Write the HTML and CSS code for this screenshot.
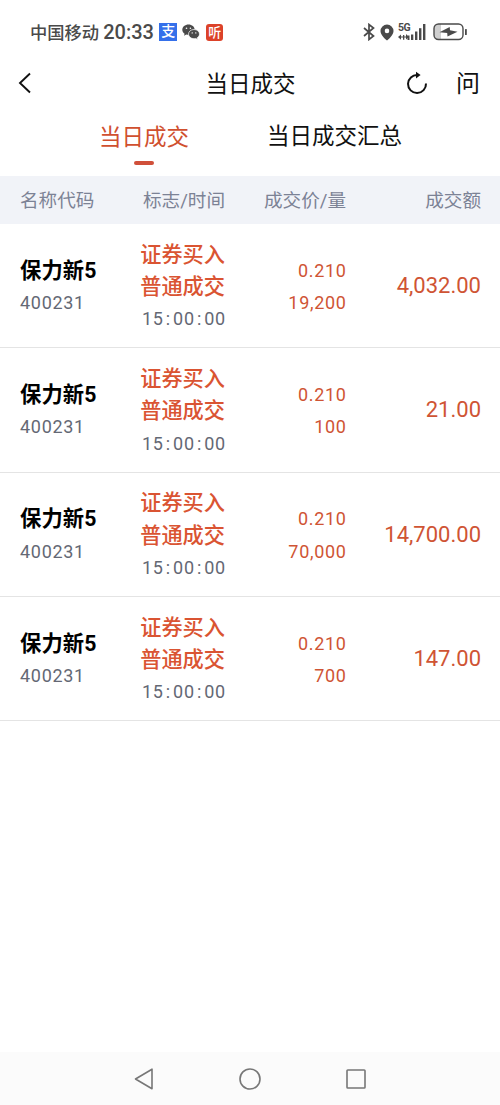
FILE: index.html
```html
<!DOCTYPE html>
<html lang="zh-CN">
<head>
    <meta charset="UTF-8">
    <meta name="viewport" content="width=device-width, initial-scale=1.0">
    <title>当日成交</title>
    <link rel="stylesheet" href="styles.css">
</head>
<body>
    <div class="container">
        <div class="status-bar">
            <div class="status-left">
                <span class="carrier">中国移动</span>
                <span class="clock">20:33</span>
                <span class="app-icon pay">支</span>
                <svg class="wechat" width="18" height="16" viewBox="0 0 18 16">
                    <path d="M6.5 0.5C3 .5.3 2.8.3 5.7c0 1.7.9 3.1 2.3 4l-.6 2 2.3-1.2c.7.2 1.4.3 2.2.3C10 10.800 12.700 8.500 12.700 5.700S10 .5 6.500.5z" fill="#4a4a4a"/>
                    <path d="M12 5.500c-3.100 0-5.500 2-5.500 4.600s2.400 4.600 5.500 4.600c.6 0 1.200-.1 1.800-.2l1.900 1-.5-1.700c1.400-.8 2.300-2.200 2.300-3.700 0-2.600-2.400-4.600-5.500-4.600z" fill="#4a4a4a" stroke="#fff" stroke-width=".7"/>
                    <g fill="#fff">
                        <circle cx="4.500" cy="4.300" r=".8"/>
                        <circle cx="8.400" cy="4.300" r=".8"/>
                        <circle cx="10.200" cy="8.900" r=".7"/>
                        <circle cx="13.800" cy="8.900" r=".7"/>
                    </g>
                </svg>
                <span class="app-icon listen">听</span>
            </div>
            <div class="status-right">
                <svg width="12" height="18" viewBox="0 0 12 18" fill="none" stroke="#4a4a4a" stroke-width="1.7">
                    <path d="M1 5l9.500 8L6 16.500v-15L10.500 5 1 13"/>
                </svg>
                <svg class="pin" width="14" height="17" viewBox="0 0 14 17">
                    <path fill="#4a4a4a" fill-rule="evenodd" d="M7 .5A6.500 6.500 0 0 0 .5 7c0 3.600 3.300 6.800 6.500 9.500 3.200-2.700 6.500-5.900 6.500-9.500A6.500 6.500 0 0 0 7 .5zM7 4.600a2.300 2.300 0 1 1 0 4.600 2.300 2.300 0 0 1 0-4.600z"/>
                </svg>
                <div class="signal">
                    <span class="network">5G</span>
                    <svg width="29" height="18" viewBox="0 0 29 18" fill="#4a4a4a">
                        <path d="M0 14l3-2.500v2h2V12h1.300v1.500H8V11l3 2.900-3 2.600v-2H6.300v2.200H5v-2.200H3v2.200z"/>
                        <rect x="9.500" y="12.500" width="2" height="4.500"/>
                        <rect x="13" y="11.500" width="2.300" height="5.500"/>
                        <rect x="17" y="8.500" width="2.400" height="8.500"/>
                        <rect x="21" y="5.200" width="2.400" height="11.800"/>
                        <rect x="25" y="1" width="2.400" height="16"/>
                    </svg>
                </div>
                <svg class="battery" width="35" height="18" viewBox="0 0 35 18">
                    <path d="M5 1h3v15.500H5a4 4 0 0 1-4-4V5a4 4 0 0 1 4-4z" fill="#cfcfcf"/>
                    <rect x="1" y="1" width="29" height="15.500" rx="4.500" fill="none" stroke="#4a4a4a" stroke-width="1.400"/>
                    <rect x="32" y="6" width="1.800" height="6" rx=".6" fill="#4a4a4a"/>
                    <path d="M6.500 9.200l10.200-5.200.3 3.300 7.500 1.500-10 4.700-.3-3.400z" fill="#4a4a4a"/>
                </svg>
            </div>
        </div>

        <div class="title-bar">
            <svg class="back" width="14" height="22" viewBox="0 0 14 22" fill="none" stroke="#111" stroke-width="1.900">
                <path d="M12 1.500L2 11l10 9.500"/>
            </svg>
            <h1>当日成交</h1>
            <div class="actions">
                <svg width="22" height="24" viewBox="0 0 22 24">
                    <path d="M11.500 4A9 9 0 1 0 20 12.500" fill="none" stroke="#111" stroke-width="2"/>
                    <path d="M10 .8l4.600 3.300L10 7.400z" fill="#111"/>
                </svg>
                <span class="ask">问</span>
            </div>
        </div>

        <div class="tabs">
            <a class="tab active">当日成交</a>
            <a class="tab">当日成交汇总</a>
        </div>

        <div class="table-head">
            <span>名称代码</span>
            <span>标志/时间</span>
            <span>成交价/量</span>
            <span>成交额</span>
        </div>

        <div class="trade-row">
            <div class="stock"><b>保力新5</b><span>400231</span></div>
            <div class="flag"><b>证券买入</b><b>普通成交</b><span class="time">15<i>:</i>00<i>:</i>00</span></div>
            <div class="price"><span>0.210</span><span>19,200</span></div>
            <div class="amount">4,032.00</div>
        </div>
        <div class="trade-row">
            <div class="stock"><b>保力新5</b><span>400231</span></div>
            <div class="flag"><b>证券买入</b><b>普通成交</b><span class="time">15<i>:</i>00<i>:</i>00</span></div>
            <div class="price"><span>0.210</span><span>100</span></div>
            <div class="amount">21.00</div>
        </div>
        <div class="trade-row">
            <div class="stock"><b>保力新5</b><span>400231</span></div>
            <div class="flag"><b>证券买入</b><b>普通成交</b><span class="time">15<i>:</i>00<i>:</i>00</span></div>
            <div class="price"><span>0.210</span><span>70,000</span></div>
            <div class="amount">14,700.00</div>
        </div>
        <div class="trade-row">
            <div class="stock"><b>保力新5</b><span>400231</span></div>
            <div class="flag"><b>证券买入</b><b>普通成交</b><span class="time">15<i>:</i>00<i>:</i>00</span></div>
            <div class="price"><span>0.210</span><span>700</span></div>
            <div class="amount">147.00</div>
        </div>

        <div class="nav-bar">
            <svg width="22" height="24" viewBox="0 0 22 24">
                <path d="M19 2.200v19.600L2.500 12z"/>
            </svg>
            <svg width="24" height="24" viewBox="0 0 24 24">
                <circle cx="12" cy="12" r="10"/>
            </svg>
            <svg width="22" height="24" viewBox="0 0 22 24">
                <rect x="2" y="3" width="18" height="18" rx=".8"/>
            </svg>
        </div>
    </div>
</body>
</html>
```
FILE: styles.css
```css
body {
    font-family: Roboto, "Noto Sans CJK SC", sans-serif;
    margin: 0;
    background-color: #fff;
    color: #111;
}
.container {
    display: flex;
    flex-direction: column;
    height: 1105px;
}
.status-bar {
    display: flex;
    justify-content: space-between;
    align-items: center;
    height: 64px;
    padding: 0 32px 0 30px;
    color: #4a4a4a;
    box-sizing: border-box;
}
.status-left,
.status-right {
    display: flex;
    align-items: center;
}
.carrier {
    font-size: 17.3px;
    font-weight: 500;
    padding-bottom: 2px;
}
.clock {
    font-size: 20px;
    font-weight: 500;
    margin-left: 4px;
    width: 55px;
}
.app-icon {
    width: 18px;
    height: 18px;
    line-height: 17px;
    font-size: 14px;
    font-weight: 500;
    text-align: center;
    color: #fff;
}
.pay {
    background-color: #3570ea;
    margin-left: 1px;
}
.wechat {
    margin: 0 6px 0 5px;
}
.listen {
    width: 17px;
    height: 17px;
    font-size: 13px;
    border-radius: 3px;
    background-color: #dc4229;
}
.pin {
    margin: 0 4px 0 5px;
}
.signal {
    position: relative;
    height: 18px;
}
.network {
    position: absolute;
    left: 0;
    top: -1px;
    font-size: 10.5px;
    line-height: 11px;
    letter-spacing: -0.6px;
    font-weight: 700;
}
.battery {
    margin-left: 6px;
}
.title-bar {
    display: grid;
    grid-template-columns: 1fr auto 1fr;
    align-items: center;
    height: 38px;
    padding: 0 20px;
}
h1 {
    margin: 0;
    padding: 2px 0 0 1px;
    font-size: 22.5px;
    font-weight: 400;
    line-height: 36px;
}
.back {
    margin-left: -2px;
}
.actions {
    display: flex;
    justify-content: flex-end;
    align-items: center;
    gap: 28px;
}
.ask {
    font-size: 24px;
    line-height: 34px;
    padding-top: 2px;
}
.tabs {
    display: flex;
    gap: 78px;
    height: 74px;
    padding-left: 99px;
}
.tab {
    display: flex;
    flex-direction: column;
    align-items: center;
    font-size: 22.5px;
    line-height: 34px;
    padding-top: 17px;
}
.tab.active {
    color: #d0502f;
    padding-top: 18px;
}
.tab.active::after {
    content: "";
    width: 20px;
    height: 4px;
    margin-top: 7px;
    border-radius: 2px;
    background-color: #d0503a;
}
.table-head,
.trade-row {
    display: grid;
    grid-template-columns: 100px 105px 121px 135px;
    align-items: center;
    padding: 0 19px 0 20px;
    text-align: right;
}
.table-head {
    height: 48px;
    font-size: 18.6px;
    line-height: 50px;
    align-items: start;
    color: #7c8295;
    background-color: #f1f3f8;
}
.table-head span:first-child {
    text-align: left;
}
.trade-row {
    height: 123.3px;
    border-bottom: 1px solid #e4e4e4;
}
.stock,
.flag,
.price {
    display: flex;
    flex-direction: column;
    padding-top: 3px;
    line-height: 32.3px;
    font-size: 18px;
    letter-spacing: 0.7px;
}
.stock {
    text-align: left;
    color: #646874;
}
.stock b {
    font-size: 21.3px;
    letter-spacing: 0.1px;
    color: #000;
}
.flag {
    color: #646874;
}
.flag b {
    font-size: 21.2px;
    font-weight: 500;
    letter-spacing: 0;
    color: #da5432;
}
.time {
    margin-right: -0.8px;
}
.time i {
    font-style: normal;
    margin: 0 2.2px;
}
.price {
    margin-right: -0.7px;
}
.price,
.amount {
    color: #cf5434;
}
.amount {
    font-size: 22px;
}
.nav-bar {
    display: flex;
    justify-content: center;
    align-items: center;
    gap: 83px;
    height: 53px;
    margin-top: auto;
    background-color: #fbfbfb;
}
.nav-bar svg {
    fill: none;
    stroke: #777;
    stroke-width: 1.6;
    stroke-linejoin: round;
}
```
